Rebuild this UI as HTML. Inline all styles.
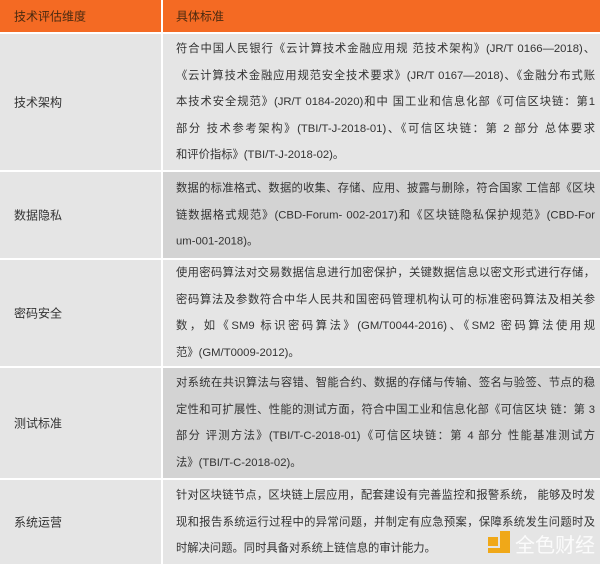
<!DOCTYPE html>
<html><head><meta charset="utf-8"><style>
body{margin:0;width:600px;height:564px;overflow:hidden;background:#fff;font-family:"Liberation Sans","Noto Sans CJK SC",sans-serif;font-size:12px;color:#333}
.r{position:absolute;left:0;width:600px}
.l{position:absolute;left:0;width:161px;top:0;bottom:0;background:#e5e5e5}
.c{position:absolute;left:163px;right:0;top:0;bottom:0;background:#e5e5e5}
.d .c{background:#d3d3d3}
.lt{position:absolute;left:14px;top:50%;transform:translateY(-50%);white-space:nowrap}
.t{position:absolute;left:13px;top:50%;transform:translateY(-50%);line-height:26.5px;white-space:nowrap;font-size:11.3px;width:419px}
.t div{text-align:justify;text-align-last:justify}
.t div.e{text-align-last:left}
.h .l,.h .c{background:#f46a23;color:#4a2a10}
</style></head><body>
<div class="r h" style="top:0;height:32px"><div class="l"><span class="lt">技术评估维度</span></div><div class="c"><span class="lt" style="left:13px">具体标准</span></div></div>
<div class="r" style="top:34px;height:136px"><div class="l"><span class="lt">技术架构</span></div><div class="c"><div class="t"><div>符合中国人民银行《云计算技术金融应用规 范技术架构》(JR/T 0166—2018)、</div><div>《云计算技术金融应用规范安全技术要求》(JR/T 0167—2018)、《金融分布式账</div><div>本技术安全规范》(JR/T 0184-2020)和中 国工业和信息化部《可信区块链：第1</div><div>部分 技术参考架构》(TBI/T-J-2018-01)、《可信区块链：第 2 部分 总体要求</div><div class="e">和评价指标》(TBI/T-J-2018-02)。</div></div></div></div>
<div class="r d" style="top:172px;height:86px"><div class="l"><span class="lt">数据隐私</span></div><div class="c"><div class="t"><div>数据的标准格式、数据的收集、存储、应用、披露与删除，符合国家 工信部《区块</div><div>链数据格式规范》(CBD-Forum- 002-2017)和《区块链隐私保护规范》(CBD-For</div><div class="e">um-001-2018)。</div></div></div></div>
<div class="r" style="top:260px;height:106px"><div class="l"><span class="lt">密码安全</span></div><div class="c"><div class="t"><div>使用密码算法对交易数据信息进行加密保护，关键数据信息以密文形式进行存储，</div><div>密码算法及参数符合中华人民共和国密码管理机构认可的标准密码算法及相关参</div><div>数，如《SM9 标识密码算法》(GM/T0044-2016)、《SM2 密码算法使用规</div><div class="e">范》(GM/T0009-2012)。</div></div></div></div>
<div class="r d" style="top:368px;height:110px"><div class="l"><span class="lt">测试标准</span></div><div class="c"><div class="t"><div>对系统在共识算法与容错、智能合约、数据的存储与传输、签名与验签、节点的稳</div><div>定性和可扩展性、性能的测试方面，符合中国工业和信息化部《可信区块 链：第 3</div><div>部分 评测方法》(TBI/T-C-2018-01)《可信区块链：第 4 部分 性能基准测试方</div><div class="e">法》(TBI/T-C-2018-02)。</div></div></div></div>
<div class="r" style="top:480px;height:84px"><div class="l"><span class="lt">系统运营</span></div><div class="c"><div class="t"><div>针对区块链节点，区块链上层应用，配套建设有完善监控和报警系统， 能够及时发</div><div>现和报告系统运行过程中的异常问题，并制定有应急预案，保障系统发生问题时及</div><div class="e">时解决问题。同时具备对系统上链信息的审计能力。</div></div></div></div>
<div style="position:absolute;left:488px;top:537px;width:10px;height:9px;background:#f0a818"></div>
<div style="position:absolute;left:500px;top:531px;width:10px;height:22px;background:#f0a818"></div>
<div style="position:absolute;left:488px;top:548px;width:22px;height:5px;background:#f0a818"></div>
<div style="position:absolute;left:515px;top:529px;font-size:20px;color:#fff;opacity:.85">全色财经</div>
</body></html>
